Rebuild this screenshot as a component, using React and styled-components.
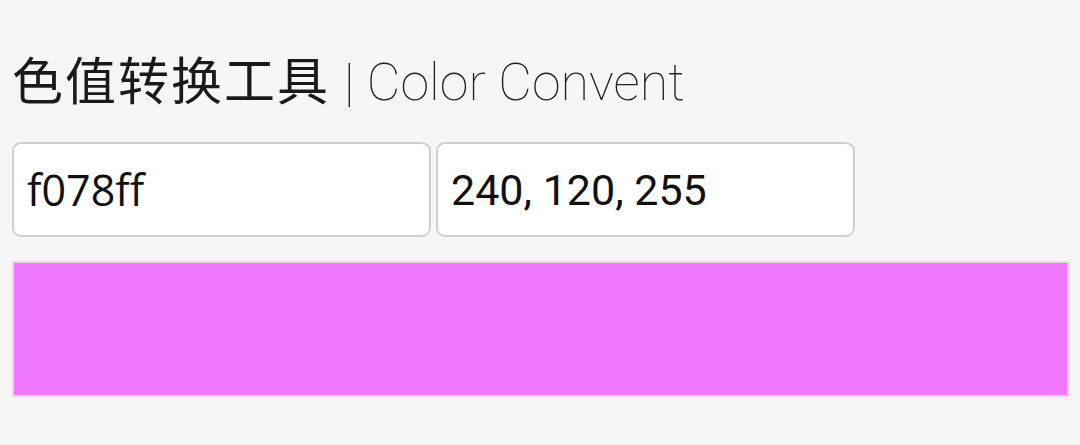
import React, { useState } from 'react';
import styled, { createGlobalStyle } from 'styled-components';

const GlobalStyle = createGlobalStyle`
  body {
    margin: 0;
    background: #f6f6f7;
    font-family: Roboto, "Noto Sans CJK SC", sans-serif;
  }
`;

const Page = styled.div`
  padding: 46px 12px 0 12px;
`;

const Title = styled.h1`
  margin: 0;
  display: flex;
  align-items: baseline;
  font-weight: 400;
  font-size: 51px;
  line-height: 64px;
  color: #1a1a1a;
`;

const Name = styled.span`
  font-family: "Noto Sans CJK SC", sans-serif;
  letter-spacing: 2px;
`;

const Sub = styled.span`
  font-family: Roboto, sans-serif;
  font-weight: 100;
  font-size: 52px;
  color: #222;
  margin-left: 14px;
`;

const Row = styled.div`
  display: flex;
  gap: 5px;
  margin-top: 27px;
`;

const Field = styled.input`
  box-sizing: border-box;
  width: 419px;
  height: 95px;
  padding: 0 13px;
  border: 2px solid #cfcfcf;
  border-radius: 9px;
  background: #fff;
  color: #111;
  font-family: ${p => (p.$mono ? '"Open Sans", sans-serif' : 'Roboto, sans-serif')};
  font-size: 43px;
  outline: none;
`;

const Swatch = styled.div`
  box-sizing: border-box;
  margin-top: 24px;
  width: 1057px;
  height: 136px;
  border: 2px solid #ecd6ee;
`;

const Fill = styled.div`
  height: 100%;
`;

export default function App() {
  const [hex, setHex] = useState('f078ff');
  const [rgb, setRgb] = useState('240, 120, 255');

  return (
    <Page>
      <GlobalStyle />
      <Title>
        <Name>色值转换工具</Name>
        <Sub>| Color Convent</Sub>
      </Title>
      <Row>
        <Field $mono value={hex} onChange={e => setHex(e.target.value)} />
        <Field value={rgb} onChange={e => setRgb(e.target.value)} />
      </Row>
      <Swatch>
        <Fill style={{ background: '#' + hex }} />
      </Swatch>
    </Page>
  );
}
